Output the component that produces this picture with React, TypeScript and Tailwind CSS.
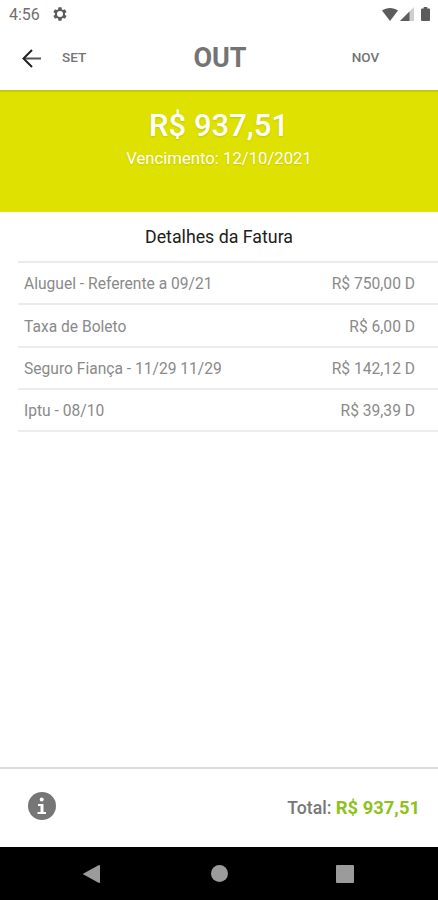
import React from "react";

type InvoiceItem = {
    label: string;
    value: string;
};

const items: InvoiceItem[] = [
    { label: "Aluguel - Referente a 09/21", value: "R$ 750,00 D" },
    { label: "Taxa de Boleto", value: "R$ 6,00 D" },
    { label: "Seguro Fiança - 11/29 11/29", value: "R$ 142,12 D" },
    { label: "Iptu - 08/10", value: "R$ 39,39 D" },
];

function StatusBar() {
    return (
        <div className="flex h-7 items-center justify-between pl-[9px] pr-[8px] text-[#5c5c5c]">
            <div className="flex items-center">
                <span className="w-[43px] pt-px text-[16px] leading-7 text-[#707070]">
                    4:56
                </span>
                <svg className="size-4" viewBox="0 0 24 24" fill="currentColor">
                    <path
                        fillRule="evenodd"
                        d="M19.4 13c0-.3.1-.6.1-1s0-.7-.1-1l2.1-1.600c.2-.2.2-.4.1-.6l-2-3.500c-.1-.2-.4-.3-.6-.2l-2.500 1c-.5-.4-1.100-.7-1.700-1l-.4-2.600c0-.3-.2-.5-.4-.5h-4c-.3 0-.5.2-.5.5l-.4 2.600c-.6.3-1.200.6-1.700 1l-2.500-1c-.2-.1-.5 0-.6.2l-2 3.500c-.1.2-.1.4.1.6l2.100 1.600c0 .3-.1.6-.1 1s0 .7.1 1l-2.100 1.600c-.2.2-.2.4-.1.6l2 3.500c.1.2.4.3.6.2l2.500-1c.5.4 1.100.7 1.700 1l.4 2.600c0 .3.200.5.5.5h4c.2 0 .4-.2.4-.5l.4-2.600c.6-.3 1.200-.6 1.700-1l2.500 1c.2.1.5 0 .6-.2l2-3.500c.1-.2.1-.4-.1-.6zM12 16.500a4.500 4.500 0 1 1 0-9 4.500 4.500 0 0 1 0 9z"
                    />
                </svg>
            </div>
            <div className="flex items-center">
                <svg className="h-[13px] w-4" viewBox="0 0 16 13" fill="currentColor">
                    <path d="M0 2.600C4.500-.8 11.500-.8 16 2.600L8 13z" />
                </svg>
                <svg className="ml-[2px] h-[14px] w-[14px]" viewBox="0 0 14 14" fill="currentColor">
                    <path d="M14 0v14H0z" className="opacity-30" />
                    <path d="M9.500 4.500V14H0z" />
                </svg>
                <svg className="ml-[7px] h-[14px] w-[9px]" viewBox="0 0 9 14" fill="currentColor">
                    <path d="M2.700 0h3.600v1.500H8a1 1 0 0 1 1 1V13a1 1 0 0 1-1 1H1a1 1 0 0 1-1-1V2.500a1 1 0 0 1 1-1h1.700z" />
                </svg>
            </div>
        </div>
    );
}

function MonthHeader() {
    return (
        <header className="grid h-[62px] grid-cols-3 items-center pb-[1px] font-medium text-[#747474]">
            <div className="flex items-center pl-[22px]">
                <svg
                    className="h-[19px] w-5"
                    viewBox="0 0 20 19"
                    fill="none"
                    stroke="#222222"
                    strokeWidth="2"
                >
                    <path d="M19 9.500H2" stroke="#555555" />
                    <path d="M10 1L1.500 9.500 10 18" />
                </svg>
                <span className="ml-5 pb-[2px] text-[13.5px]">SET</span>
            </div>
            <h1 className="pl-[2px] text-center text-[27px] leading-none font-bold">
                OUT
            </h1>
            <span className="pb-[2px] pl-px text-center text-[13.5px]">NOV</span>
        </header>
    );
}

function AmountBanner() {
    return (
        <section className="h-[122px] border-t-2 border-[#c8c900] bg-[#dfe100] text-center text-white">
            <p className="pt-[14px] text-[31px] leading-10 font-medium text-shadow-[0_1px_2px_rgb(0_0_0/0.12)]">
                R$ 937,51
            </p>
            <p className="pt-[1px] text-[16.7px] leading-6 text-shadow-[0_1px_2px_rgb(0_0_0/0.12)]">
                Vencimento: 12/10/2021
            </p>
        </section>
    );
}

export default function App() {
    return (
        <div className="flex h-[900px] w-[438px] flex-col overflow-hidden bg-white font-['Roboto',sans-serif]">
            <StatusBar />
            <MonthHeader />
            <AmountBanner />
            <main className="flex-1">
                <h2 className="h-[49px] text-center text-[17.8px] leading-[49px] text-[#202020]">
                    Detalhes da Fatura
                </h2>
                <ul className="ml-[18px] border-t-2 border-[#ebebeb]">
                    {items.map((item) => (
                        <li
                            key={item.label}
                            className="flex h-[42.3px] items-center justify-between border-b-2 border-[#ededed] pt-[4px] pr-[23px] pl-[6px] text-[15.6px] text-[#8a8a8a]"
                        >
                            <span>{item.label}</span>
                            <span>{item.value}</span>
                        </li>
                    ))}
                </ul>
            </main>
            <footer className="flex h-[80px] items-center justify-between border-t-2 border-[#dcdcdc] pr-[18px] pl-[28px]">
                <svg className="mb-[4px] size-7" viewBox="0 0 28 28">
                    <circle cx="14" cy="14" r="14" fill="#767676" />
                    <circle cx="13.700" cy="7.500" r="2" fill="#ffffff" />
                    <path d="M10 12h5.500v8H18v2H9.500v-2h3v-6H10z" fill="#ffffff" />
                </svg>
                <p className="text-[17.7px] font-medium text-[#777777]">
                    Total:{" "}
                    <span className="text-[18.4px] font-bold text-[#8cc220]">
                        R$ 937,51
                    </span>
                </p>
            </footer>
            <nav className="flex h-[53px] items-center bg-black pl-[83px] text-[#9b9b9b]">
                <svg className="h-[18px] w-[17px]" viewBox="0 0 17 18" fill="currentColor">
                    <path d="M16 0q1 0 1 1v16q0 1-1 1L.500 9.500q-.8-.5 0-1z" />
                </svg>
                <span className="ml-[111px] size-[17px] rounded-full bg-[#9b9b9b]" />
                <span className="ml-[108px] size-[18px] rounded-[1px] bg-[#9b9b9b]" />
            </nav>
        </div>
    );
}
